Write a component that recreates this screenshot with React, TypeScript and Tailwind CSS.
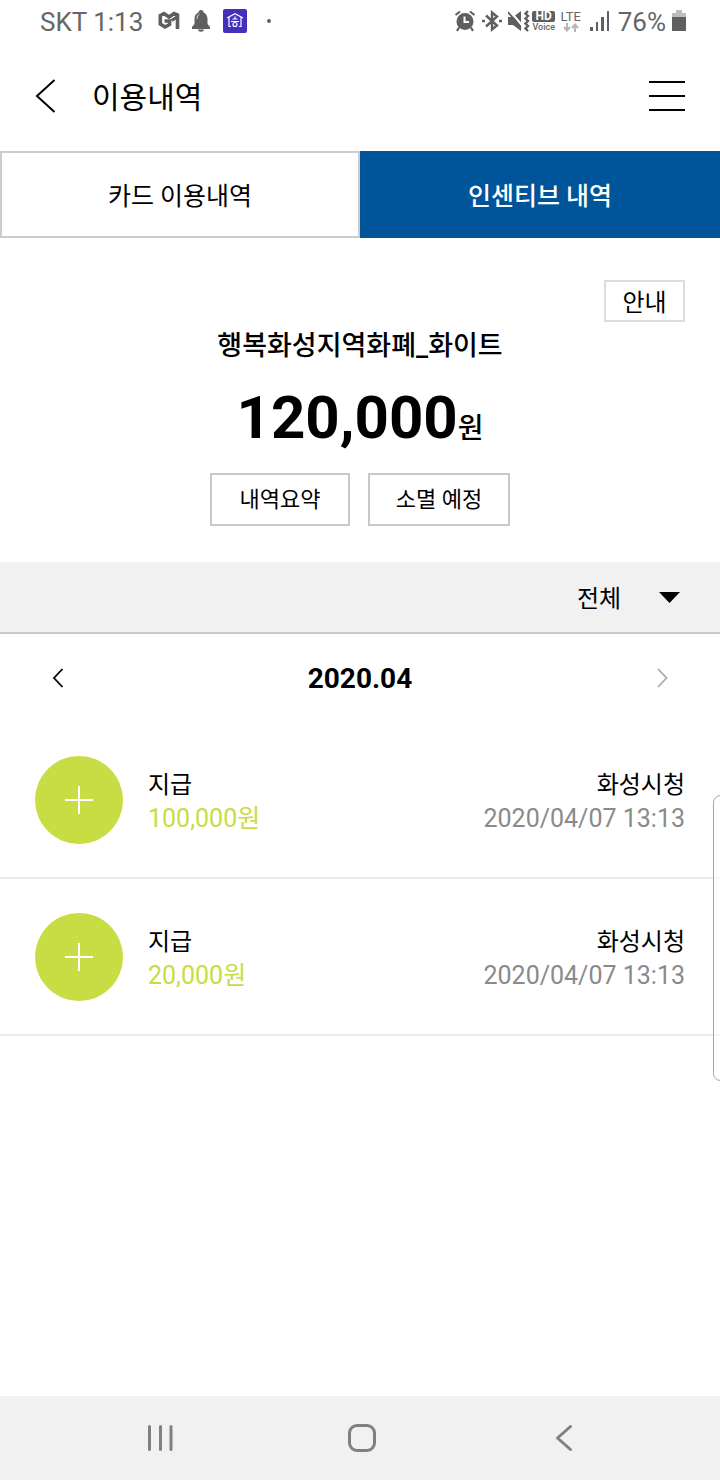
import { useState } from "react";
import type { ReactNode } from "react";
import clsx from "clsx";

interface HistoryItem {
  id: number;
  type: string;
  amount: string;
  place: string;
  date: string;
}

const items: HistoryItem[] = [
  { id: 1, type: "지급", amount: "100,000원", place: "화성시청", date: "2020/04/07 13:13" },
  { id: 2, type: "지급", amount: "20,000원", place: "화성시청", date: "2020/04/07 13:13" },
];

function StatusBar() {
  return (
    <div className="flex h-[42px] items-center justify-between pl-10 pr-[34px] text-[26px] leading-8 text-[#666666]">
      <div className="flex items-center">
        <span className="whitespace-nowrap pt-0.5">SKT 1:13</span>
        {/* membership app */}
        <svg className="ml-3.5 h-6 w-6" viewBox="0 0 24 24" fill="none" stroke="#5f5f5f" strokeWidth="3.600">
          <path d="M20.500 20 V6 L17 4.500 L12 8 L7 4.500 L3.300 6.500 V15 L8 18 L12.500 15.500 V12 H7.500" />
          <path d="M14.500 11.500 L20 8" strokeWidth="3" />
        </svg>
        <svg className="ml-2.5 h-6 w-5" viewBox="0 0 20 24" fill="#5f5f5f">
          <circle cx="10" cy="3.500" r="2.500" />
          <path d="M10 3c-4 0-6.500 3-6.500 7v5L1 18v2h18v-2l-2.500-3v-5c0-4-2.500-7-6.500-7z" />
          <path d="M7 20.500h6c0 3-6 3-6 0z" />
          <path d="M6 10c0-2.500 1-4 2.500-5" fill="none" stroke="#ddd" strokeWidth="1" />
        </svg>
        <svg className="ml-3 h-6 w-6" viewBox="0 0 24 24" fill="none" stroke="#fff" strokeWidth="1.200">
          <rect width="24" height="24" rx="2" fill="#4330bd" stroke="none" />
          <path d="M4 9 L12 4.800 L20 9 M6 8.500 V17.500 H8 M18 8.500 V17.500 H16" />
          <path d="M12 7.500 V9.500 M9.500 10 H14.500 M8 12.500 H16" />
          <circle cx="12" cy="15.500" r="2" />
        </svg>
        <span className="ml-5 h-1 w-1 rounded-full bg-[#5f5f5f]" />
      </div>

      <div className="flex items-center">
        {/* alarm */}
        <svg className="h-6 w-[22px]" viewBox="0 0 22 24" fill="none" stroke="#5f5f5f">
          <circle cx="11" cy="12.500" r="8.500" fill="#5f5f5f" stroke="none" />
          <path d="M1.500 6 L6 2.500 M16 2.500 L20.500 6 M5 18.500 L3 22 M17 18.500 L19 22" strokeWidth="2.200" />
          <path d="M10.500 7.500 V13 H15" stroke="#fff" strokeWidth="2" />
        </svg>
        {/* bluetooth */}
        <svg className="ml-1.5 h-6 w-5" viewBox="0 0 20 24" fill="none" stroke="#5f5f5f" strokeWidth="2.400">
          <path d="M4 6.500 L15 16.500 L10 20.500 V3.500 L15 7.500 L4 17.500" />
          <path d="M0 12 H3 M17 12 H20" strokeWidth="2.500" />
        </svg>
        {/* vibrate */}
        <svg className="ml-1.5 h-6 w-[22px]" viewBox="0 0 22 24" fill="#5f5f5f">
          <path d="M0 8h5l8-6v20L5 16H0z" />
          <path d="M2 2 L15 17.500" stroke="#fff" strokeWidth="2" />
          <path d="M0 3 L13 18.500" stroke="#5f5f5f" strokeWidth="1.800" />
          <path d="M20 2 L17.500 4.500 L20 7 L17.500 9.500 L20 12 L17.500 14.500 L20 17 L17.500 19.500 L20 22" fill="none" stroke="#5f5f5f" strokeWidth="2.400" />
        </svg>
        <div className="ml-0.5 flex w-6 flex-col items-center">
          <span className="flex h-[11px] w-[23px] items-center justify-center rounded-xs bg-[#5f5f5f] text-[12px] font-bold leading-none text-white">
            HD
          </span>
          <span className="text-[9px] font-medium leading-[10px]">Voice</span>
        </div>
        <div className="ml-1 flex w-[22px] flex-col items-center">
          <span className="text-[13px] leading-[13px]">LTE</span>
          <svg className="h-[9px] w-4" viewBox="0 0 16 9" fill="none" stroke="#b5b5b5" strokeWidth="2">
            <path d="M4 0 V7 M1 4 L4 7.500 L7 4 M12 9 V2 M9 5 L12 1.500 L15 5" />
          </svg>
        </div>
        <svg className="ml-2 h-6 w-5" viewBox="0 0 20 24" fill="#5f5f5f">
          <path d="M0 18h3v4H0zM6 13h2v9H6zM11 8h3v14h-3zM17 2h2v20h-2z" />
        </svg>
        <span className="ml-2 whitespace-nowrap pt-0.5">76%</span>
        <svg className="ml-1.5 h-6 w-[14px]" viewBox="0 0 14 24">
          <path d="M4 1h6v3h4v5H0V4h4z" fill="#bdbdbd" />
          <path d="M0 8h14v14H0z" fill="#5f5f5f" />
        </svg>
      </div>
    </div>
  );
}

function OutlineButton({ children, className }: { children: ReactNode; className?: string }) {
  return (
    <button type="button" className={clsx("whitespace-nowrap border-2 bg-white", className)}>
      {children}
    </button>
  );
}

export default function App() {
  const [tab, setTab] = useState("incentive");
  const [filter, setFilter] = useState("all");

  const tabClass = (name: string) =>
    clsx(
      "h-[87px] w-1/2 pt-1 text-[25px] leading-8",
      tab === name
        ? "bg-[#00559a] font-medium text-white"
        : "border-2 border-[#cccccc] bg-white text-black"
    );

  return (
    <div className="relative flex min-h-screen flex-col overflow-x-hidden bg-white font-[Roboto,'Noto_Sans_CJK_KR',sans-serif] text-black">
      <StatusBar />

      <header className="flex h-[108px] items-center justify-between pl-[34px] pr-[35px]">
        <div className="flex items-center gap-9">
          <button type="button" aria-label="뒤로">
            <svg className="h-9 w-[22px]" viewBox="0 0 22 36" fill="none" stroke="#000" strokeWidth="2">
              <path d="M20.500 2 L3 18 L20.500 34" />
            </svg>
          </button>
          <h1 className="pt-1 text-[30px] leading-10">이용내역</h1>
        </div>
        <button type="button" aria-label="메뉴" className="flex w-9 flex-col gap-3">
          <span className="h-0.5 w-full bg-black" />
          <span className="h-0.5 w-full bg-black" />
          <span className="h-0.5 w-full bg-black" />
        </button>
      </header>

      <div className="mt-px flex" role="tablist">
        <button type="button" role="tab" aria-selected={tab === "card"} onClick={() => setTab("card")} className={tabClass("card")}>
          카드 이용내역
        </button>
        <button type="button" role="tab" aria-selected={tab === "incentive"} onClick={() => setTab("incentive")} className={tabClass("incentive")}>
          인센티브 내역
        </button>
      </div>

      <main className="flex-1">
        {/* Balance */}
        <section className="flex flex-col items-center px-[35px] pb-9 pt-[42px]">
          <OutlineButton className="h-[42px] w-[81px] self-end border-[#dcdcdc] pt-1 text-[24px] leading-8">안내</OutlineButton>
          <h2 className="mt-1 text-[27px] font-medium leading-10">행복화성지역화폐_화이트</h2>
          <p className="mt-4 flex items-baseline text-[60px] font-bold leading-[72px]">
            120,000<span className="text-[28px] font-medium">원</span>
          </p>
          <div className="mt-2 flex gap-[18px]">
            <OutlineButton className="h-[53px] w-[140px] border-[#c8c8c8] text-[22px] leading-8">내역요약</OutlineButton>
            <OutlineButton className="h-[53px] w-[142px] border-[#c8c8c8] text-[22px] leading-8">소멸 예정</OutlineButton>
          </div>
        </section>

        {/* Filter */}
        <div className="flex h-[72px] items-center justify-end border-b-2 border-[#c8c8c8] bg-[#f1f1f1] pr-10">
          <div className="relative">
            <select
              aria-label="내역 구분"
              value={filter}
              onChange={(e) => setFilter(e.target.value)}
              className="h-11 appearance-none bg-transparent pr-[58px] pt-1 text-[24px] leading-10"
            >
              <option value="all">전체</option>
              <option value="in">지급</option>
              <option value="out">사용</option>
            </select>
            <svg className="pointer-events-none absolute right-0 top-[17px] h-[11px] w-[21px]" viewBox="0 0 21 11">
              <path d="M0 0h21L10.500 11z" />
            </svg>
          </div>
        </div>

        {/* Month */}
        <div className="flex h-[88px] items-center justify-between px-[50px]">
          <button type="button" aria-label="이전 달">
            <svg className="h-5 w-4" viewBox="0 0 16 20" fill="none" stroke="#000" strokeWidth="1.800">
              <path d="M12.500 1 L4 10 L12.500 19" />
            </svg>
          </button>
          <span className="pt-0.5 text-[28px] font-bold leading-8">2020.04</span>
          <button type="button" aria-label="다음 달">
            <svg className="h-5 w-4" viewBox="0 0 16 20" fill="none" stroke="#aaa" strokeWidth="1.800">
              <path d="M4 1 L12.500 10 L4 19" />
            </svg>
          </button>
        </div>

        {/* History */}
        <ul>
          {items.map((item) => (
            <li key={item.id} className="flex h-[157px] items-center border-b-2 border-[#ebebeb] px-[35px]">
              <span className="flex h-[88px] w-[88px] shrink-0 items-center justify-center rounded-full bg-[#c8dc43]">
                <svg className="h-7 w-7" viewBox="0 0 28 28" stroke="#fff" strokeWidth="2">
                  <path d="M14 0v28M0 14h28" />
                </svg>
              </span>
              <div className="ml-[25px] flex-1 pt-1 leading-[34px]">
                <p className="text-[24px]">{item.type}</p>
                <p className="text-[25px] text-[#c8dc43]">{item.amount}</p>
              </div>
              <div className="pt-1 text-right leading-[34px]">
                <p className="text-[24px]">{item.place}</p>
                <p className="text-[25px] text-[#8a8a8a]">{item.date}</p>
              </div>
            </li>
          ))}
        </ul>
      </main>

      {/* Edge panel handle */}
      <div className="absolute -right-2 top-[795px] h-[286px] w-[15px] rounded-lg border border-[#a5a5a5] bg-white/60" />

      <nav className="flex h-[84px] items-center justify-center gap-[170px] bg-[#f1f1f1] pl-1">
        <button type="button" aria-label="최근 앱">
          <svg className="h-8 w-8" viewBox="0 0 32 32" stroke="#808080" strokeWidth="3" strokeLinecap="round">
            <path d="M5.500 4.500v23M16.500 4.500v23M27 4.500v23" />
          </svg>
        </button>
        <button type="button" aria-label="홈">
          <svg className="h-8 w-8" viewBox="0 0 32 32" fill="none" stroke="#808080" strokeWidth="3">
            <rect x="3.500" y="3.500" width="25" height="25" rx="7.500" />
          </svg>
        </button>
        <button type="button" aria-label="이전">
          <svg className="h-8 w-8" viewBox="0 0 32 32" fill="none" stroke="#808080" strokeWidth="3" strokeLinecap="round" strokeLinejoin="round">
            <path d="M22.500 4.500 L9.500 16 L22.500 27.500" />
          </svg>
        </button>
      </nav>
    </div>
  );
}
